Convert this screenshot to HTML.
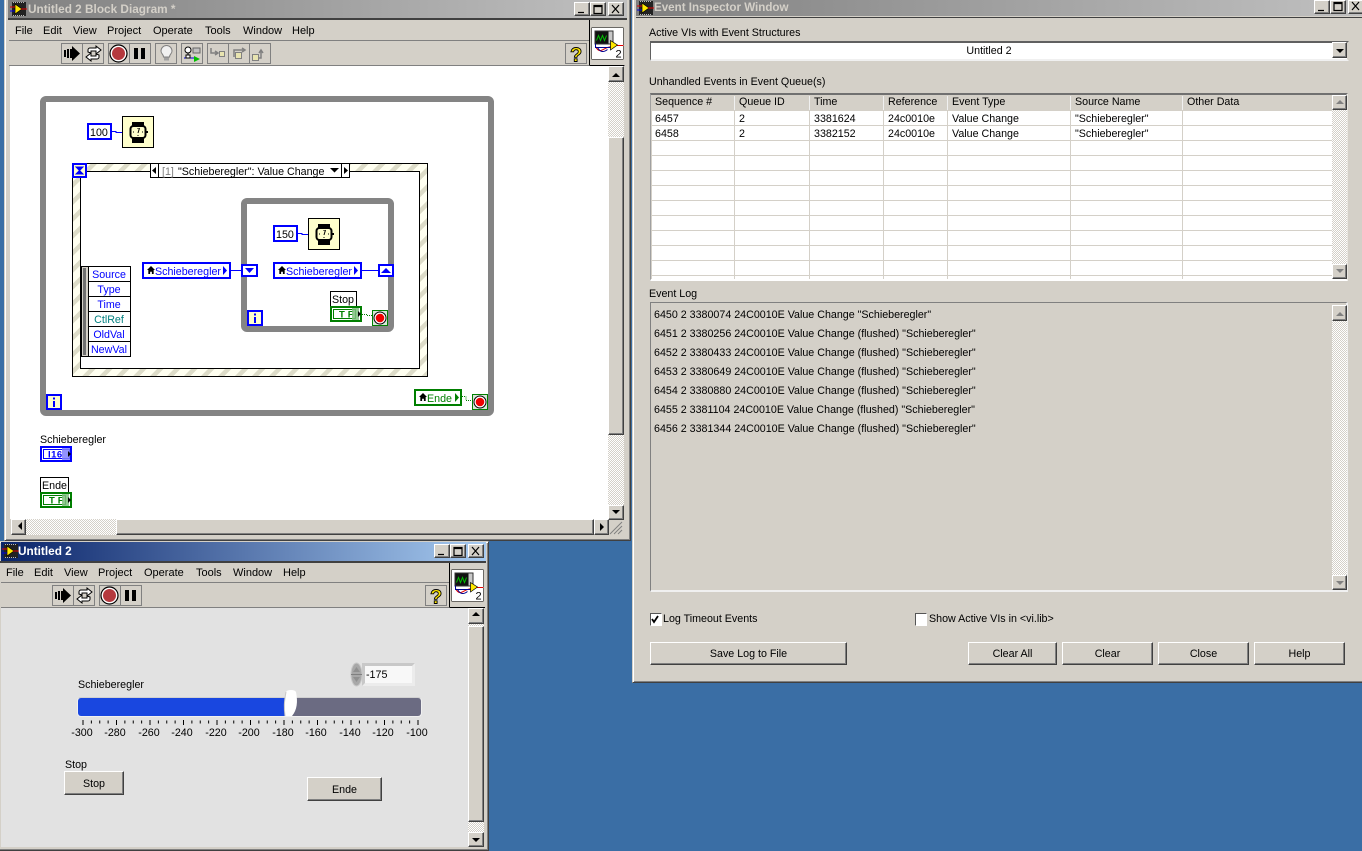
<!DOCTYPE html>
<html><head><meta charset="utf-8"><style>
html,body{margin:0;padding:0}
body{width:1362px;height:847px;overflow:hidden;background:#3a6ea5;position:relative;font:10.7px "Liberation Sans",sans-serif;color:#000}
div{position:absolute;box-sizing:border-box}
.win{background:#d4d0c8;border:1px solid;border-color:#d4d0c8 #404040 #404040 #d4d0c8;box-shadow:inset 1px 1px #fff,inset -1px -1px #808080}
.b{background:#d4d0c8;border:1px solid;border-color:#fff #404040 #404040 #fff;box-shadow:inset -1px -1px #808080;text-align:center}
.ck{background:repeating-conic-gradient(#d4d0c8 0 25%,#fff 0 50%) 0 0/2px 2px}
.t{white-space:nowrap;line-height:13px}
svg{position:absolute;left:0;top:0}
text{font-family:"Liberation Sans",sans-serif;font-size:10.7px}
</style></head><body>

<!-- Block diagram window -->
<div class="win" style="left:4px;top:-4px;width:627px;height:545px"></div>
<div style="left:8px;top:0;width:619px;height:18px;background:linear-gradient(90deg,#808080,#c0c0c0)"></div>
<div style="left:8px;top:18px;width:619px;height:2px;background:#404040"></div>
<div style="left:9px;top:20px;width:616px;height:46px;background:#d4d0c8;border-bottom:1px solid #808080"></div>
<div style="left:9px;top:40px;width:580px;height:1px;background:#808080"></div>
<div style="left:10px;top:66px;width:598px;height:453px;background:#fff"></div>

<!-- Block scrollbars -->
<div class="ck" style="left:608px;top:82px;width:16px;height:423px"></div>
<div class="b" style="left:608px;top:66px;width:16px;height:16px"></div>
<div class="b" style="left:608px;top:137px;width:16px;height:298px"></div>
<div class="b" style="left:608px;top:505px;width:16px;height:15px"></div>
<div class="ck" style="left:26px;top:519px;width:568px;height:16px"></div>
<div class="b" style="left:11px;top:519px;width:15px;height:16px"></div>
<div class="b" style="left:116px;top:519px;width:478px;height:16px"></div>
<div class="b" style="left:594px;top:519px;width:15px;height:16px"></div>

<!-- Event inspector window -->
<div class="win" style="left:632px;top:-4px;width:734px;height:687px"></div>
<div style="left:636px;top:0;width:726px;height:16px;background:linear-gradient(90deg,#808080,#c0c0c0)"></div>
<div style="left:636px;top:17px;width:726px;height:1px;background:#404040"></div>

<div class="t" style="left:649px;top:27px">Active VIs with Event Structures</div>
<div style="left:650px;top:41px;width:699px;height:20px;background:#fff;border:2px solid;border-color:#606060 #d4d0c8 #f0f0f0 #606060;border-left-width:1px"></div>
<div class="t" style="left:650px;top:44px;width:678px;text-align:center;line-height:14px">Untitled 2</div>
<div class="b" style="left:1332px;top:42px;width:15px;height:16px"></div>
<div class="t" style="left:649px;top:76px">Unhandled Events in Event Queue(s)</div>

<div style="left:650px;top:93px;width:698px;height:188px;background:#d4d0c8;border:2px solid;border-color:#707070 #e8e6e0 #fff #a0a0a0;border-left-width:1px"></div>
<div style="left:652px;top:111px;width:680px;height:168px;background:#fff"></div>
<div class="ck" style="left:1332px;top:110px;width:15px;height:154px"></div>
<div class="b" style="left:1332px;top:95px;width:15px;height:15px"></div>
<div class="b" style="left:1332px;top:264px;width:15px;height:15px"></div>

<div class="t" style="left:649px;top:288px">Event Log</div>
<div style="left:650px;top:302px;width:698px;height:290px;border:2px solid;border-color:#808080 #f0f0f0 #f0f0f0 #808080;border-top-width:1px;border-left-width:1px"></div>
<div class="ck" style="left:1332px;top:321px;width:15px;height:254px"></div>
<div class="b" style="left:1332px;top:305px;width:15px;height:16px"></div>
<div class="b" style="left:1332px;top:575px;width:15px;height:15px"></div>

<div style="left:650px;top:613px;width:12px;height:13px;background:#fff;border:1px solid;border-color:#555 #fff #fff #555"></div>
<div class="t" style="left:663px;top:613px">Log Timeout Events</div>
<div style="left:915px;top:613px;width:12px;height:13px;background:#fff;border:1px solid;border-color:#555 #fff #fff #555"></div>
<div class="t" style="left:929px;top:613px">Show Active VIs in &lt;vi.lib&gt;</div>
<div class="b t" style="left:650px;top:642px;width:197px;height:23px;line-height:23px">Save Log to File</div>
<div class="b t" style="left:968px;top:642px;width:89px;height:23px;line-height:23px">Clear All</div>
<div class="b t" style="left:1062px;top:642px;width:91px;height:23px;line-height:23px">Clear</div>
<div class="b t" style="left:1158px;top:642px;width:91px;height:23px;line-height:23px">Close</div>
<div class="b t" style="left:1254px;top:642px;width:91px;height:23px;line-height:23px">Help</div>

<!-- Front panel window -->
<div class="win" style="left:-3px;top:541px;width:492px;height:310px"></div>
<div style="left:1px;top:542px;width:485px;height:19px;background:linear-gradient(90deg,#0a246a,#a6caf0)"></div>
<div style="left:0;top:561px;width:486px;height:2px;background:#404040"></div>
<div style="left:1px;top:563px;width:484px;height:45px;background:#d4d0c8;border-bottom:1px solid #808080"></div>
<div style="left:1px;top:582px;width:448px;height:1px;background:#808080"></div>
<div style="left:1px;top:608px;width:467px;height:239px;background:#e2e2e2"></div>
<div class="ck" style="left:468px;top:624px;width:16px;height:2px"></div>
<div class="b" style="left:468px;top:608px;width:16px;height:16px"></div>
<div class="b" style="left:468px;top:626px;width:16px;height:196px"></div>
<div class="ck" style="left:468px;top:822px;width:16px;height:10px"></div>
<div class="b" style="left:468px;top:832px;width:16px;height:15px"></div>

<div class="t" style="left:78px;top:679px">Schieberegler</div>
<div style="left:77px;top:697px;width:345px;height:20px;border-radius:4px;background:linear-gradient(90deg,#1947e0 0 62%,#6b6b82 62%);border:1px solid #f0f0f0;border-top-color:#d0d0d0"></div>
<div class="t" style="left:65px;top:759px">Stop</div>
<div class="b t" style="left:64px;top:771px;width:60px;height:24px;line-height:24px">Stop</div>
<div class="b t" style="left:307px;top:777px;width:75px;height:24px;line-height:24px">Ende</div>
<div style="left:362px;top:663px;width:53px;height:23px;background:#f8f8f8;border:3px solid;border-color:#c8c8c8 #ececec #ececec #c8c8c8"></div>
<div class="t" style="left:366px;top:669px">-175</div>

<!-- window buttons -->
<div class="b" style="left:574px;top:2px;width:16px;height:14px"></div>
<div class="b" style="left:590px;top:2px;width:16px;height:14px"></div>
<div class="b" style="left:608px;top:2px;width:16px;height:14px"></div>
<div class="b" style="left:1314px;top:0;width:16px;height:14px"></div>
<div class="b" style="left:1330px;top:0;width:16px;height:14px"></div>
<div class="b" style="left:1348px;top:0;width:16px;height:14px"></div>
<div class="b" style="left:434px;top:544px;width:16px;height:14px"></div>
<div class="b" style="left:450px;top:544px;width:16px;height:14px"></div>
<div class="b" style="left:468px;top:544px;width:16px;height:14px"></div>

<svg width="1362" height="847" viewBox="0 0 1362 847">
<defs>
<pattern id="stripe" width="12" height="12" patternUnits="userSpaceOnUse" patternTransform="rotate(45)">
<rect width="12" height="12" fill="#fffff0"/><rect width="4.500" height="12" fill="#dddcc8"/></pattern>
<symbol id="lv" viewBox="0 0 16 16" overflow="visible"><rect x="2" y="1" width="14" height="14" fill="#222"/><path d="M3 1.500h12M3 14.500h12" stroke="#bbb" stroke-dasharray="1 1"/><path d="M5 3L12 8L5 13Z" fill="#ffe800" stroke="#000" stroke-width=".7"/><path d="M0 6H5M11 8H17" stroke="#e00000"/><path d="M0 10H5" stroke="#0000e0"/></symbol>
<symbol id="run" viewBox="0 0 21 21"><path d="M3 7h2v7H3zM6 6h2v9H6zM9 6h2v9H9zM11 3l8 7.500-8 7.500z" fill="#000"/></symbol>
<symbol id="rep" viewBox="0 0 21 21"><path d="M5 9V7a2 2 0 012-2h6V3l5 4-5 4V8H8v2zM16 12v2a2 2 0 01-2 2H8v2l-5-4 5-4v3h5v-2z" fill="#fff" stroke="#000"/></symbol>
<symbol id="abort" viewBox="0 0 21 21"><circle cx="10.500" cy="10.500" r="8.500" fill="#fff" stroke="#000" stroke-width="1.200"/><circle cx="10.500" cy="10.500" r="6.500" fill="#b5393e"/></symbol>
<symbol id="pause" viewBox="0 0 21 21"><path d="M5 5h4v11H5zM12 5h4v11h-4z" fill="#000"/></symbol>
<symbol id="help" viewBox="0 0 21 21"><text x="4" y="18.500" style="font:bold 20px 'Liberation Sans',sans-serif" fill="#ffe800" stroke="#000" stroke-width=".9">?</text></symbol>
<symbol id="conn" viewBox="0 0 32 32"><rect width="32" height="32" fill="#fff" stroke="#000"/><rect x="3.500" y="3.500" width="18" height="13" fill="#c8c8c8" stroke="#333"/><rect x="4" y="4" width="13" height="12" fill="#111"/><path d="M5 13l2-5 2 5 2-5 2 5 2-5" stroke="#00c000" fill="none"/><path d="M4 19c4 8 8 2 12 1l8-2h8" stroke="#e00000" fill="none"/><path d="M4 16v4h16M6 20c3 5 6 5 10 2" stroke="#000090" fill="none"/><path d="M19 13l7 4.500-7 5z" fill="#ffe800" stroke="#000" stroke-width=".7"/><text x="24" y="30" fill="#000" style="font-size:11px">2</text></symbol>
<symbol id="wait" viewBox="0 0 32 32"><rect x=".5" y=".5" width="31" height="31" fill="#ffffcc" stroke="#000"/><path d="M10 6h12v5h-12zM10 21h12v6h-12z" fill="#000"/><rect x="8.500" y="10" width="15" height="12" rx="3" fill="#ffffcc" stroke="#000" stroke-width="2"/><rect x="24" y="15" width="2" height="2"/><path d="M16 12v1M16 19v1M11 16h1M20 16h1M16 17l1.500-5" stroke="#000"/></symbol>
<symbol id="stp" viewBox="0 0 16 16"><rect x=".5" y=".5" width="15" height="15" fill="#d8e8d8" stroke="#007f00"/><circle cx="8" cy="8" r="6" fill="#fff" stroke="#000"/><circle cx="8" cy="8" r="4.300" fill="#f00000"/></symbol>
<symbol id="ii" viewBox="0 0 16 16"><rect x="1" y="1" width="14" height="14" fill="#ffffcc" stroke="#0000ff" stroke-width="2"/><path d="M7 3.500h2v2H7zM7 7h2v6H7z" fill="#0000ff"/></symbol>
<symbol id="tf" viewBox="0 0 32 16"><rect x="1" y="1" width="30" height="14" fill="#fff" stroke="#007f00" stroke-width="2"/><rect x="3.500" y="3.500" width="22" height="9" fill="#fff" stroke="#007f00"/><text x="9" y="11.500" fill="#007f00" style="font:bold 9.500px 'Liberation Sans',sans-serif;letter-spacing:3px">TF</text><rect x="22" y="2" width="7" height="12" fill="#7fbf7f" opacity=".85"/><path d="M28 5l3 3-3 3z"/></symbol>
<symbol id="home" viewBox="0 0 9 9"><path d="M4.500 0L9 4.500H7.500V9H5.500V6.500H3.500V9H1.500V4.500H0z"/></symbol>
</defs>

<!-- title bars -->
<use href="#lv" x="10" y="1" width="16" height="16"/>
<text x="28" y="13" fill="#d4d0c8" style="font-weight:bold;font-size:11.800px">Untitled 2 Block Diagram *</text>
<use href="#lv" x="637" y="0" width="16" height="16"/>
<text x="654" y="11" fill="#d4d0c8" style="font-weight:bold;font-size:11.600px">Event Inspector Window</text>
<use href="#lv" x="2" y="543" width="16" height="16"/>
<text x="18" y="555" fill="#fff" style="font-weight:bold;font-size:11.800px">Untitled 2</text>

<g fill="none" stroke="#000" stroke-width="1.200">
<path d="M578 12.500h6M594 5.500h8v8h-8zM594 6.500h8M612 5l7 8M619 5l-7 8"/>
<path d="M1318 10.500h6M1334 2.500h8v8h-8zM1334 3.500h8M1352 2l7 8M1359 2l-7 8"/>
<path d="M438 554.500h6M454 547.500h8v8h-8zM454 548.500h8M472 547l7 8M479 547l-7 8"/>
</g>

<!-- menus -->
<g fill="#000" style="font-size:11px">
<text style="font-size:11px" x="15" y="34">File</text><text style="font-size:11px" x="43" y="34">Edit</text><text style="font-size:11px" x="73" y="34">View</text><text style="font-size:11px" x="107" y="34">Project</text><text style="font-size:11px" x="153" y="34">Operate</text><text style="font-size:11px" x="205" y="34">Tools</text><text style="font-size:11px" x="243" y="34">Window</text><text style="font-size:11px" x="292" y="34">Help</text>
<text style="font-size:11px" x="6" y="576">File</text><text style="font-size:11px" x="34" y="576">Edit</text><text style="font-size:11px" x="64" y="576">View</text><text style="font-size:11px" x="98" y="576">Project</text><text style="font-size:11px" x="144" y="576">Operate</text><text style="font-size:11px" x="196" y="576">Tools</text><text style="font-size:11px" x="233" y="576">Window</text><text style="font-size:11px" x="283" y="576">Help</text>
</g>

<!-- block toolbar -->
<g fill="#d4d0c8" stroke="#808080">
<rect x="61.500" y="43.500" width="21" height="20"/><rect x="82.500" y="43.500" width="21" height="20"/><rect x="108.500" y="43.500" width="21" height="20"/><rect x="129.500" y="43.500" width="21" height="20"/><rect x="155.500" y="43.500" width="21" height="20"/><rect x="181.500" y="43.500" width="21" height="20"/><rect x="207.500" y="43.500" width="21" height="20"/><rect x="228.500" y="43.500" width="21" height="20"/><rect x="249.500" y="43.500" width="21" height="20"/><rect x="565.500" y="43.500" width="21" height="20"/>
<rect x="52.500" y="585.500" width="21" height="20"/><rect x="73.500" y="585.500" width="21" height="20"/><rect x="99.500" y="585.500" width="21" height="20"/><rect x="120.500" y="585.500" width="21" height="20"/><rect x="425.500" y="585.500" width="21" height="20"/>
</g>
<use href="#run" x="61" y="43" width="21" height="21"/><use href="#rep" x="83" y="43" width="21" height="21"/><use href="#abort" x="108" y="43" width="21" height="21"/><use href="#pause" x="129" y="43" width="21" height="21"/><use href="#help" x="566" y="43" width="21" height="21"/>
<use href="#run" x="52" y="585" width="21" height="21"/><use href="#rep" x="74" y="585" width="21" height="21"/><use href="#abort" x="99" y="585" width="21" height="21"/><use href="#pause" x="120" y="585" width="21" height="21"/><use href="#help" x="426" y="585" width="21" height="21"/>
<!-- bulb -->
<path d="M161 51a5.500 5.500 0 1111 0c0 3-2.500 3-2.500 6h-6c0-3-2.500-3-2.500-6z" fill="#f0f0f0" stroke="#808080"/><path d="M164 57.500h5v3h-5z" fill="#a0a0a0"/>
<!-- probe -->
<circle cx="188" cy="50" r="3" fill="#fff" stroke="#000"/><path d="M188 53v5" stroke="#000"/><rect x="193" y="48" width="7" height="5" fill="#c0c0c0" stroke="#666"/><path d="M184 58h12" stroke="#0000e0"/><rect x="186" y="55" width="4" height="3" fill="#fff" stroke="#000"/><path d="M194 56l6 3-6 3z" fill="#00c000"/>
<!-- step icons -->
<g fill="none" stroke="#808080" stroke-width="1.500"><path d="M211 48v5h6M215 51l3 2-3 2M234 57v-7h10M242 48l3 2-3 2M254 58h7v-7M259 53l2-3 2 3"/></g>
<g fill="#e8e4b0" stroke="#808080"><rect x="219.500" y="51.500" width="5" height="5"/><rect x="235.500" y="52.500" width="6" height="6"/><rect x="252.500" y="54.500" width="6" height="6"/></g>

<!-- connector panes -->
<path d="M589.500 20V65M449.500 563V607" stroke="#000"/><path d="M589.500 65.500H624M449.500 607.500H485" stroke="#000"/>
<use href="#conn" x="591.500" y="27.500" width="32" height="32"/>
<use href="#conn" x="451.500" y="569.500" width="32" height="32"/>

<!-- scroll arrows -->
<g fill="#000"><path d="M612 77l4-4 4 4zM612 510h8l-4 4zM22 522l-4 4 4 4zM600 523l4 4-4 4zM472 616l4-4 4 4zM472 838h8l-4 4zM1336 49h8l-4 4z"/></g>
<g fill="#808080"><path d="M1336 104l4-4 4 4zM1336 269h8l-4 4zM1336 316l4-4 4 4zM1336 581h8l-4 4z"/></g>
<path d="M610 534l12-12M614 534l8-8M618 534l4-4" stroke="#808080"/>

<!-- loops -->
<rect x="43" y="99" width="448" height="314" rx="3" fill="none" stroke="#848484" stroke-width="6"/>
<rect x="72.500" y="163.500" width="355" height="213" fill="url(#stripe)" stroke="#000"/>
<rect x="80.500" y="171.500" width="339" height="197" fill="#fff" stroke="#000"/>
<rect x="244" y="201" width="147" height="128" rx="3" fill="#fff" stroke="#848484" stroke-width="6"/>

<!-- selector -->
<rect x="150.500" y="163.500" width="199" height="14" fill="#fff" stroke="#000"/>
<path d="M158.500 164V177M341.500 164V177" stroke="#000"/>
<path d="M156 167l-4 3.500 4 3.500zM344 167l4 3.500-4 3.500zM330 168h9l-4.500 4.500z"/>
<text x="162" y="175" fill="#808080">[1]</text>
<text x="178" y="175" fill="#000">"Schieberegler": Value Change</text>
<rect x="73" y="164" width="13" height="13" fill="#ffffcc" stroke="#0000ff" stroke-width="2"/>
<path d="M76 167h7l-7 7h7z" fill="#0000ff" stroke="#0000ff"/>

<!-- wires -->
<g fill="none" stroke="#0000ff">
<path d="M112 131.500h4v1h6M298 233.500h4v1h6M231 270.500h10M362 270.500h16"/>
</g>
<path d="M362 314.500h5M367 315.500h5M462 396.500h4v4h6" fill="none" stroke="#007f00" stroke-dasharray="1 1"/>

<!-- constants -->
<rect x="88" y="124" width="23" height="15" fill="#fff" stroke="#0000ff" stroke-width="2"/>
<text x="90" y="136">100</text>
<rect x="274" y="226" width="23" height="15" fill="#fff" stroke="#0000ff" stroke-width="2"/>
<text x="276" y="238">150</text>
<use href="#wait" x="122" y="116" width="32" height="32"/>
<use href="#wait" x="308" y="218" width="32" height="32"/>

<!-- event data node -->
<rect x="81.500" y="266.500" width="49" height="90" fill="#fff" stroke="#000"/>
<rect x="82" y="267" width="6" height="89" fill="#d4d0c8"/><rect x="83" y="268" width="3" height="87" fill="#707070"/>
<path d="M88.500 266V357M88 281.500h43M88 296.500h43M88 311.500h43M88 326.500h43M88 341.500h43" stroke="#000"/>
<g fill="#0000ff" text-anchor="middle">
<text x="109" y="278">Source</text><text x="109" y="293">Type</text><text x="109" y="308">Time</text><text x="109" y="323" fill="#007f7f">CtlRef</text><text x="109" y="338">OldVal</text><text x="109" y="353">NewVal</text>
</g>

<!-- locals -->
<rect x="143" y="263" width="87" height="15" fill="#fff" stroke="#0000ff" stroke-width="2"/>
<use href="#home" x="147" y="266" width="8" height="8"/>
<text x="155" y="275" fill="#0000ff">Schieberegler</text>
<path d="M223 266l4 4.500-4 4.500z" fill="#0000ff"/>
<rect x="274" y="263" width="87" height="15" fill="#fff" stroke="#0000ff" stroke-width="2"/>
<use href="#home" x="278" y="266" width="8" height="8"/>
<text x="286" y="275" fill="#0000ff">Schieberegler</text>
<path d="M354 266l4 4.500-4 4.500z" fill="#0000ff"/>
<rect x="242" y="265" width="15" height="11" fill="#fff" stroke="#0000ff" stroke-width="2"/><path d="M245 268h9l-4.500 5z" fill="#0000ff"/>
<rect x="379" y="265" width="14" height="11" fill="#fff" stroke="#0000ff" stroke-width="2"/><path d="M381 273h10l-5-5z" fill="#0000ff"/>
<rect x="415" y="390" width="46" height="15" fill="#fff" stroke="#007f00" stroke-width="2"/>
<use href="#home" x="419" y="393" width="8" height="8"/>
<text x="427" y="402" fill="#007f00">Ende</text>
<path d="M455 393l4 4.500-4 4.500z" fill="#007f00"/>

<!-- terminals -->
<use href="#ii" x="247" y="310" width="16" height="16"/>
<use href="#ii" x="46" y="394" width="16" height="16"/>
<use href="#stp" x="372" y="310" width="16" height="16"/>
<use href="#stp" x="472" y="394" width="16" height="16"/>
<rect x="330.500" y="291.500" width="26" height="15" fill="#fff" stroke="#000"/><text x="332" y="303">Stop</text>
<use href="#tf" x="330" y="306" width="32" height="16"/>
<rect x="40.500" y="477.500" width="28" height="15" fill="#fff" stroke="#000"/><text x="42" y="489">Ende</text>
<use href="#tf" x="40" y="492" width="32" height="16"/>
<text x="40" y="443">Schieberegler</text>
<rect x="41" y="447" width="30" height="14" fill="#fff" stroke="#0000ff" stroke-width="2"/>
<rect x="43.500" y="449.500" width="26" height="9" fill="#fff" stroke="#0000ff"/>
<text x="48" y="457.500" fill="#0000ff" style="font:bold 9.500px 'Liberation Sans',sans-serif;letter-spacing:.5px">I16</text>
<rect x="62" y="448" width="8" height="12" fill="#7f7fff" opacity=".85"/>
<path d="M68 451l3 3-3 3z"/>

<!-- table -->
<g stroke="#d4d0c8" fill="none">
<path d="M652 125.500H1332M652 140.500H1332M652 155.500H1332M652 170.500H1332M652 185.500H1332M652 200.500H1332M652 215.500H1332M652 230.500H1332M652 245.500H1332M652 260.500H1332M652 275.500H1332"/>
<path d="M734.500 111V279M809.500 111V279M883.500 111V279M947.500 111V279M1070.500 111V279M1182.500 111V279"/>
</g>
<path d="M734.500 96V110M809.500 96V110M883.500 96V110M947.500 96V110M1070.500 96V110M1182.500 96V110" stroke="#f0f0f0"/>
<g fill="#000">
<text x="655" y="105">Sequence #</text><text x="739" y="105">Queue ID</text><text x="814" y="105">Time</text><text x="888" y="105">Reference</text><text x="952" y="105">Event Type</text><text x="1075" y="105">Source Name</text><text x="1187" y="105">Other Data</text>
<text x="655" y="122">6457</text><text x="739" y="122">2</text><text x="814" y="122">3381624</text><text x="888" y="122">24c0010e</text><text x="952" y="122">Value Change</text><text x="1075" y="122">"Schieberegler"</text>
<text x="655" y="137">6458</text><text x="739" y="137">2</text><text x="814" y="137">3382152</text><text x="888" y="137">24c0010e</text><text x="952" y="137">Value Change</text><text x="1075" y="137">"Schieberegler"</text>
<text x="654" y="318">6450 2 3380074 24C0010E Value Change "Schieberegler"</text>
<text x="654" y="337">6451 2 3380256 24C0010E Value Change (flushed) "Schieberegler"</text>
<text x="654" y="356">6452 2 3380433 24C0010E Value Change (flushed) "Schieberegler"</text>
<text x="654" y="375">6453 2 3380649 24C0010E Value Change (flushed) "Schieberegler"</text>
<text x="654" y="394">6454 2 3380880 24C0010E Value Change (flushed) "Schieberegler"</text>
<text x="654" y="413">6455 2 3381104 24C0010E Value Change (flushed) "Schieberegler"</text>
<text x="654" y="432">6456 2 3381344 24C0010E Value Change (flushed) "Schieberegler"</text>
</g>
<path d="M652 619l2 3 4-6" fill="none" stroke="#000" stroke-width="1.800"/>

<!-- slider -->
<path d="M285 716c-1-8-1-14 1-24q1-2 5-2 4 0 5 2c2 10 1 18-4 24z" fill="#fff"/>
<path d="M285 716c-1-8-1-14 1-24" fill="none" stroke="#c8c8c8"/>
<path d="M82.500 722H419" stroke="#000" stroke-width="3" stroke-dasharray="1 7.375"/>
<path d="M82.500 722.500H419" stroke="#000" stroke-width="5" stroke-dasharray="1 32.500"/>
<g text-anchor="middle" fill="#000">
<text x="82" y="736">-300</text><text x="115" y="736">-280</text><text x="149" y="736">-260</text><text x="182" y="736">-240</text><text x="216" y="736">-220</text><text x="249" y="736">-200</text><text x="283" y="736">-180</text><text x="316" y="736">-160</text><text x="350" y="736">-140</text><text x="383" y="736">-120</text><text x="417" y="736">-100</text>
</g>
<!-- spinner -->
<ellipse cx="356.500" cy="674.500" rx="5.500" ry="11.500" fill="#a8a8a8" stroke="#c8c8c8"/>
<path d="M353 672l3.500-5 3.500 5zM353 677h7l-3.500 5z" fill="#909090"/><path d="M351 674.500h11" stroke="#808080"/>
</svg>
</body></html>
